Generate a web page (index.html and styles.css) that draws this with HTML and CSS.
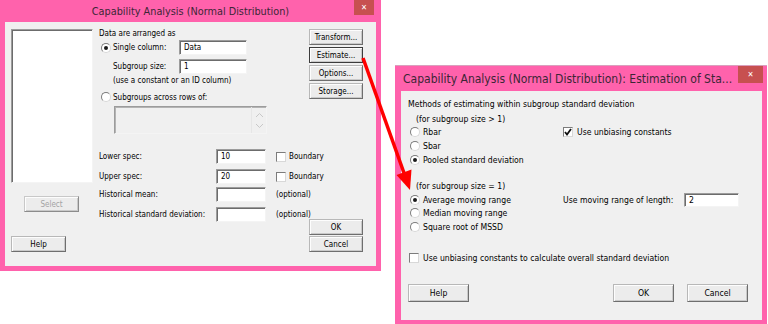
FILE: index.html
```html
<!DOCTYPE html>
<html lang="en">

<head>
    <meta charset="UTF-8">
    <meta name="viewport" content="width=device-width, initial-scale=1.0">
    <title>Capability Analysis (Normal Distribution)</title>
    <link rel="stylesheet" href="styles.css">
</head>

<body>
    <div class="desk">

        <!-- main dialog -->
        <div class="win winMain">
            <div class="titlebar">
                <span class="titleText">Capability Analysis (Normal Distribution)</span>
                <span class="closeBtn">&#x2715;</span>
            </div>
            <div class="client">
                <div class="colLeft">
                    <div class="listbox"></div>
                    <button class="btn btnSelect" disabled>Select</button>
                    <button class="btn btnHelp">Help</button>
                </div>

                <div class="colMid">
                    <div class="row r1">Data are arranged as</div>
                    <div class="row r2">
                        <span class="radio checked"></span>
                        <span class="lbl lblShort">Single column:</span>
                        <span class="input inShort">Data</span>
                    </div>
                    <div class="row r3 indent">
                        <span class="lbl lblShort">Subgroup size:</span>
                        <span class="input inShort">1</span>
                    </div>
                    <div class="row r4 indent">(use a constant or an ID column)</div>
                    <div class="row r5">
                        <span class="radio"></span>
                        <span class="lbl">Subgroups across rows of:</span>
                    </div>
                    <div class="multi">
                        <div class="scroll">
                            <svg width="9" height="6" viewBox="0 0 9 6"><path d="M1 5 L4.5 1.5 L8 5" fill="none" stroke="#c8c8c8" stroke-width="1"/></svg>
                            <svg width="9" height="6" viewBox="0 0 9 6"><path d="M1 1 L4.5 4.5 L8 1" fill="none" stroke="#c8c8c8" stroke-width="1"/></svg>
                        </div>
                    </div>
                    <div class="row r7">
                        <span class="lbl lblLong">Lower spec:</span>
                        <span class="input inSpec">10</span>
                        <span class="check"></span>
                        <span>Boundary</span>
                    </div>
                    <div class="row r8">
                        <span class="lbl lblLong">Upper spec:</span>
                        <span class="input inSpec">20</span>
                        <span class="check"></span>
                        <span>Boundary</span>
                    </div>
                    <div class="row r9">
                        <span class="lbl lblLong">Historical mean:</span>
                        <span class="input inSpec"></span>
                        <span class="opt">(optional)</span>
                    </div>
                    <div class="row r10">
                        <span class="lbl lblLong">Historical standard deviation:</span>
                        <span class="input inSpec"></span>
                        <span class="opt">(optional)</span>
                    </div>
                </div>

                <div class="colRight">
                    <button class="btn">Transform...</button>
                    <button class="btn focus">Estimate...</button>
                    <button class="btn">Options...</button>
                    <button class="btn">Storage...</button>
                    <button class="btn btnOk">OK</button>
                    <button class="btn btnCancel">Cancel</button>
                </div>
            </div>
        </div>

        <!-- estimate sub dialog -->
        <div class="win winSub">
            <div class="titlebar">
                <span class="titleText">Capability Analysis (Normal Distribution): Estimation of Sta...</span>
                <span class="closeBtn">&#x2715;</span>
            </div>
            <div class="client">
                <div class="row s1">Methods of estimating within subgroup standard deviation</div>
                <div class="row s2 indent2">(for subgroup size &gt; 1)</div>
                <div class="block b1">
                    <div class="opts">
                        <div class="row sr"><span class="radio"></span>Rbar</div>
                        <div class="row sr"><span class="radio"></span>Sbar</div>
                        <div class="row sr"><span class="radio checked"></span>Pooled standard deviation</div>
                    </div>
                    <div class="row sr"><span class="check checked"><svg width="8" height="8" viewBox="0 0 8 8"><path d="M1 4 L3 6.5 L7 1" fill="none" stroke="#111" stroke-width="1.8"/></svg></span>Use unbiasing constants</div>
                </div>
                <div class="row s3 indent2">(for subgroup size = 1)</div>
                <div class="block b2">
                    <div class="opts">
                        <div class="row sr2"><span class="radio checked"></span>Average moving range</div>
                        <div class="row sr2"><span class="radio"></span>Median moving range</div>
                        <div class="row sr2"><span class="radio"></span>Square root of MSSD</div>
                    </div>
                    <div class="row sr">
                        <span class="lbl lblLen">Use moving range of length:</span>
                        <span class="input inLen">2</span>
                    </div>
                </div>
                <div class="row s4"><span class="check"></span>Use unbiasing constants to calculate overall standard deviation</div>
                <div class="btnRow">
                    <button class="btn btnWide">Help</button>
                    <button class="btn btnWide btnPush">OK</button>
                    <button class="btn btnWide btnGap">Cancel</button>
                </div>
            </div>
        </div>

        <svg class="arrow" width="768" height="324" viewBox="0 0 768 324">
            <line x1="363" y1="58" x2="404" y2="173" stroke="#ff0000" stroke-width="3.5"/>
            <polygon points="410,190 396.5,175 411.5,169.5" fill="#ff0000"/>
        </svg>
    </div>
</body>

</html>
```

FILE: styles.css
```css
body {
    margin: 0;
    background: white;
    font-family: "DejaVu Sans Condensed", "Liberation Sans", sans-serif;
    font-size: 8px;
    color: #000;
}

.desk {
    position: relative;
    width: 768px;
    height: 324px;
    overflow: hidden;
}

.win {
    position: absolute;
    background-color: #ff62ac;
    display: flex;
    flex-direction: column;
}

.winMain {
    left: 0;
    top: 0;
    width: 371px;
    padding: 0 5px 5px 5px;
}

.winSub {
    left: 395px;
    top: 65px;
    width: 361px;
    padding: 0 5px 4px 6px;
    border-top: 1px solid #d9a0bd;
    font-size: 8.6px;
}

.titlebar {
    position: relative;
    height: 22px;
    display: flex;
    align-items: center;
    justify-content: center;
    color: #3c2636;
}

.titleText {
    font-size: 10.8px;
}

.winSub .titlebar {
    height: 25px;
    justify-content: flex-start;
    padding-left: 2px;
}

.winSub .titleText {
    font-size: 12px;
}

.closeBtn {
    position: absolute;
    top: 0;
    right: 2px;
    width: 20px;
    height: 15px;
    background-color: #c75050;
    color: white;
    font-size: 8px;
    font-weight: bold;
    display: flex;
    align-items: center;
    justify-content: center;
}

.winSub .closeBtn {
    top: 0;
    right: -1px;
    width: 25px;
    height: 17px;
}

.client {
    background-color: #f0f0f0;
}

.winMain .client {
    height: 244px;
    display: flex;
}

.winSub .client {
    height: 229px;
    display: flex;
    flex-direction: column;
    padding: 6px 14px 0 7px;
    box-sizing: border-box;
}

/* controls */

.btn {
    font: inherit;
    color: #000;
    background-color: #ececec;
    border: 1px solid;
    border-color: #b8b8b8 #6e6e6e #6e6e6e #b8b8b8;
    box-shadow: inset 1px 1px 0 #fdfdfd, inset -1px -1px 0 #c9c9c9;
    height: 16px;
    padding: 0;
    margin: 0;
    box-sizing: border-box;
}

.btn.focus {
    border-color: #3c3c3c;
}

.btn[disabled] {
    color: #a3a3a3;
    border-color: #c8c8c8 #8c8c8c #8c8c8c #c8c8c8;
}

.lbl {
    flex: none;
}

.input {
    flex: none;
    display: flex;
    align-items: center;
    box-sizing: border-box;
    background: white;
    border: 1px solid;
    border-color: #9c9c9c #f4f4f4 #f4f4f4 #9c9c9c;
    box-shadow: inset 1px 1px 0 #6c6c6c;
    padding-left: 4px;
    height: 15px;
}

.radio {
    width: 10px;
    height: 10px;
    box-sizing: border-box;
    border-radius: 50%;
    border: 1px solid;
    border-color: #7c7c7c #d8d8d8 #d8d8d8 #7c7c7c;
    background: white;
    display: inline-flex;
    align-items: center;
    justify-content: center;
    margin: 0 2px 0 2px;
    flex: none;
}

.winSub .radio {
    margin-right: 3px;
}

.radio.checked::after {
    content: "";
    width: 4px;
    height: 4px;
    border-radius: 50%;
    background: #1a1a1a;
}

.check {
    width: 10px;
    height: 10px;
    box-sizing: border-box;
    border: 1px solid;
    border-color: #7c7c7c #d8d8d8 #d8d8d8 #7c7c7c;
    background: white;
    display: inline-flex;
    align-items: center;
    justify-content: center;
    flex: none;
}

.row {
    display: flex;
    align-items: center;
    white-space: nowrap;
}

/* main dialog */

.colLeft {
    width: 82px;
    margin-left: 6px;
    padding: 7px 0 14px 0;
    display: flex;
    flex-direction: column;
}

.listbox {
    height: 154px;
    box-sizing: border-box;
    background: white;
    border: 1px solid;
    border-color: #9c9c9c #f4f4f4 #f4f4f4 #9c9c9c;
    box-shadow: inset 1px 1px 0 #6c6c6c;
}

.btnSelect {
    width: 55px;
    margin-top: 13px;
    margin-left: 13px;
}

.btnHelp {
    width: 55px;
    margin-top: auto;
}

.colMid {
    width: 210px;
    margin-left: 6px;
    padding-top: 5px;
    display: flex;
    flex-direction: column;
}

.r1 { height: 13px; }
.r2 { height: 15px; }
.r3 { height: 15px; margin-top: 4px; }
.r4 { height: 13px; }
.r5 { height: 14px; margin-top: 3px; }
.r7 { height: 15px; margin-top: 15px; }
.r8 { height: 15px; margin-top: 5px; }
.r9 { height: 15px; margin-top: 3px; }
.r10 { height: 15px; margin-top: 5px; }

.indent {
    padding-left: 14px;
}

.lblShort {
    width: 66px;
}

.inShort {
    width: 68px;
}

.lblLong {
    width: 117px;
}

.inSpec {
    width: 50px;
    margin-right: 10px;
}

.r7 .check,
.r8 .check {
    margin-right: 3px;
}

.multi {
    height: 28px;
    width: 153px;
    margin: 2px 0 0 15px;
    box-sizing: border-box;
    border: 1px solid;
    border-color: #9c9c9c #f4f4f4 #f4f4f4 #9c9c9c;
    box-shadow: inset 1px 1px 0 #b4b4b4;
    background: #f0f0f0;
    display: flex;
    justify-content: flex-end;
}

.scroll {
    width: 14px;
    display: flex;
    flex-direction: column;
    justify-content: space-between;
    align-items: center;
    padding: 5px 0 4px 0;
    border-left: 1px solid #e6e6e6;
}

.colRight {
    width: 54px;
    padding: 7px 0 14px 0;
    display: flex;
    flex-direction: column;
    gap: 2px;
}

.btnOk {
    margin-top: auto;
}

.btnCancel {
    margin-top: -1px;
}

/* estimate dialog */

.s1 { height: 14px; }
.s2 { height: 14px; margin-top: 1px; }
.s3 { height: 14px; margin-top: 12px; }
.s4 { height: 14px; margin-top: 17.5px; padding-left: 1px; }

.indent2 {
    padding-left: 8px;
}

.block {
    display: flex;
}

.b1 {
    margin-top: -1px;
}

.opts {
    width: 155px;
    display: flex;
    flex-direction: column;
}

.sr { height: 14px; }
.sr2 { height: 13.5px; }

.b1 > .sr .check {
    margin-right: 4px;
}

.s4 .check {
    margin-right: 4px;
}

.lblLen {
    width: 121px;
}

.inLen {
    width: 55px;
    height: 14px;
}

.btnRow {
    display: flex;
    margin-top: 19px;
}

.btnWide {
    width: 61px;
    height: 18px;
}

.btnPush {
    margin-left: auto;
}

.btnGap {
    margin-left: 13px;
}

.arrow {
    position: absolute;
    left: 0;
    top: 0;
    pointer-events: none;
}
```
